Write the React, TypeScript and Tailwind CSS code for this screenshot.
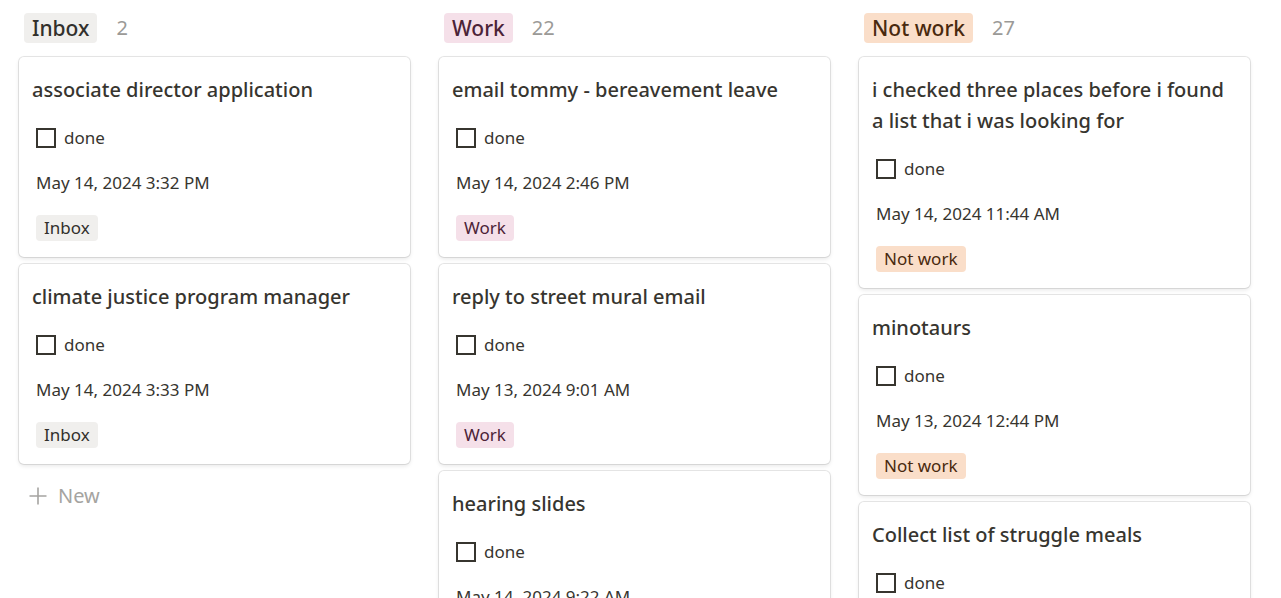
type Tone = "inbox" | "work" | "notwork";

interface Card {
  title: string;
  date: string;
}

interface Column {
  name: string;
  count: number;
  tone: Tone;
  cards: Card[];
  showNew?: boolean;
}

const toneClasses: Record<Tone, string> = {
  inbox: "bg-[#f0efed] text-[#32302c]",
  work: "bg-[#f5e0e9] text-[#4c2337]",
  notwork: "bg-[#fadec9] text-[#49290e]",
};

const columns: Column[] = [
  {
    name: "Inbox",
    count: 2,
    tone: "inbox",
    showNew: true,
    cards: [
      { title: "associate director application", date: "May 14, 2024 3:32 PM" },
      { title: "climate justice program manager", date: "May 14, 2024 3:33 PM" },
    ],
  },
  {
    name: "Work",
    count: 22,
    tone: "work",
    cards: [
      { title: "email tommy - bereavement leave", date: "May 14, 2024 2:46 PM" },
      { title: "reply to street mural email", date: "May 13, 2024 9:01 AM" },
      { title: "hearing slides", date: "May 14, 2024 9:22 AM" },
    ],
  },
  {
    name: "Not work",
    count: 27,
    tone: "notwork",
    cards: [
      {
        title: "i checked three places before i found a list that i was looking for",
        date: "May 14, 2024 11:44 AM",
      },
      { title: "minotaurs", date: "May 13, 2024 12:44 PM" },
      { title: "Collect list of struggle meals", date: "May 14, 2024 1:10 PM" },
    ],
  },
];

const BoardCard = ({ card, column }: { card: Card; column: Column }) => {
  return (
    <div className="w-[391px] shrink-0 rounded-[5px] bg-white shadow-[0_0_0_1px_rgba(15,15,15,0.1),0_2px_4px_rgba(15,15,15,0.1)]">
      {/* Title */}
      <div className="px-[13px] pt-[17px] pb-[10px] pr-[20px] text-[20px] font-medium leading-[31px] text-[#37352f]">
        {card.title}
      </div>

      {/* Checkbox property */}
      <div className="flex h-[45px] items-center gap-[8px] px-[17px]">
        <span className="h-[20px] w-[20px] border-2 border-[#37352f]" />
        <span className="text-[17px] text-[#37352f]">done</span>
      </div>

      {/* Date */}
      <div className="flex h-[45px] items-center px-[17px] text-[17px] text-[#37352f]">
        {card.date}
      </div>

      {/* Tag */}
      <div className="flex h-[45px] items-center px-[17px]">
        <span
          className={`rounded-[4px] px-[8px] text-[17px] leading-[26px] ${toneClasses[column.tone]}`}
        >
          {column.name}
        </span>
      </div>
      <div className="h-[7px]" />
    </div>
  );
};

export default function App() {
  return (
    <div
      className="h-[598px] w-[1281px] overflow-hidden bg-white"
      style={{ fontFamily: '"Noto Sans", "Open Sans", sans-serif' }}
    >
      <div className="flex gap-[29px] pl-[19px]">
        {columns.map((column) => (
          <div key={column.name} className="flex w-[391px] shrink-0 flex-col">
            {/* Header */}
            <div className="flex h-[57px] items-start gap-[19px] pt-[13px] pl-[5px]">
              <span
                className={`rounded-[4px] px-[8px] text-[21px] font-medium leading-[30px] ${toneClasses[column.tone]}`}
              >
                {column.name}
              </span>
              <span className="text-[20px] leading-[30px] text-[#9b9a97]">{column.count}</span>
            </div>

            <div className="flex flex-col gap-[7px]">
              {column.cards.map((card) => (
                <BoardCard key={card.title} card={card} column={column} />
              ))}
            </div>

            {column.showNew && (
              <div className="flex h-[48px] items-center gap-[11px] pl-[10px] pt-[15px] text-[20px] text-[#a5a4a1]">
                <svg width="18" height="18" viewBox="0 0 18 18" aria-hidden="true">
                  <path d="M9 0.5V17.5M0.5 9H17.5" stroke="#a5a4a1" strokeWidth="1.6" />
                </svg>
                <span>New</span>
              </div>
            )}
          </div>
        ))}
      </div>
    </div>
  );
}
